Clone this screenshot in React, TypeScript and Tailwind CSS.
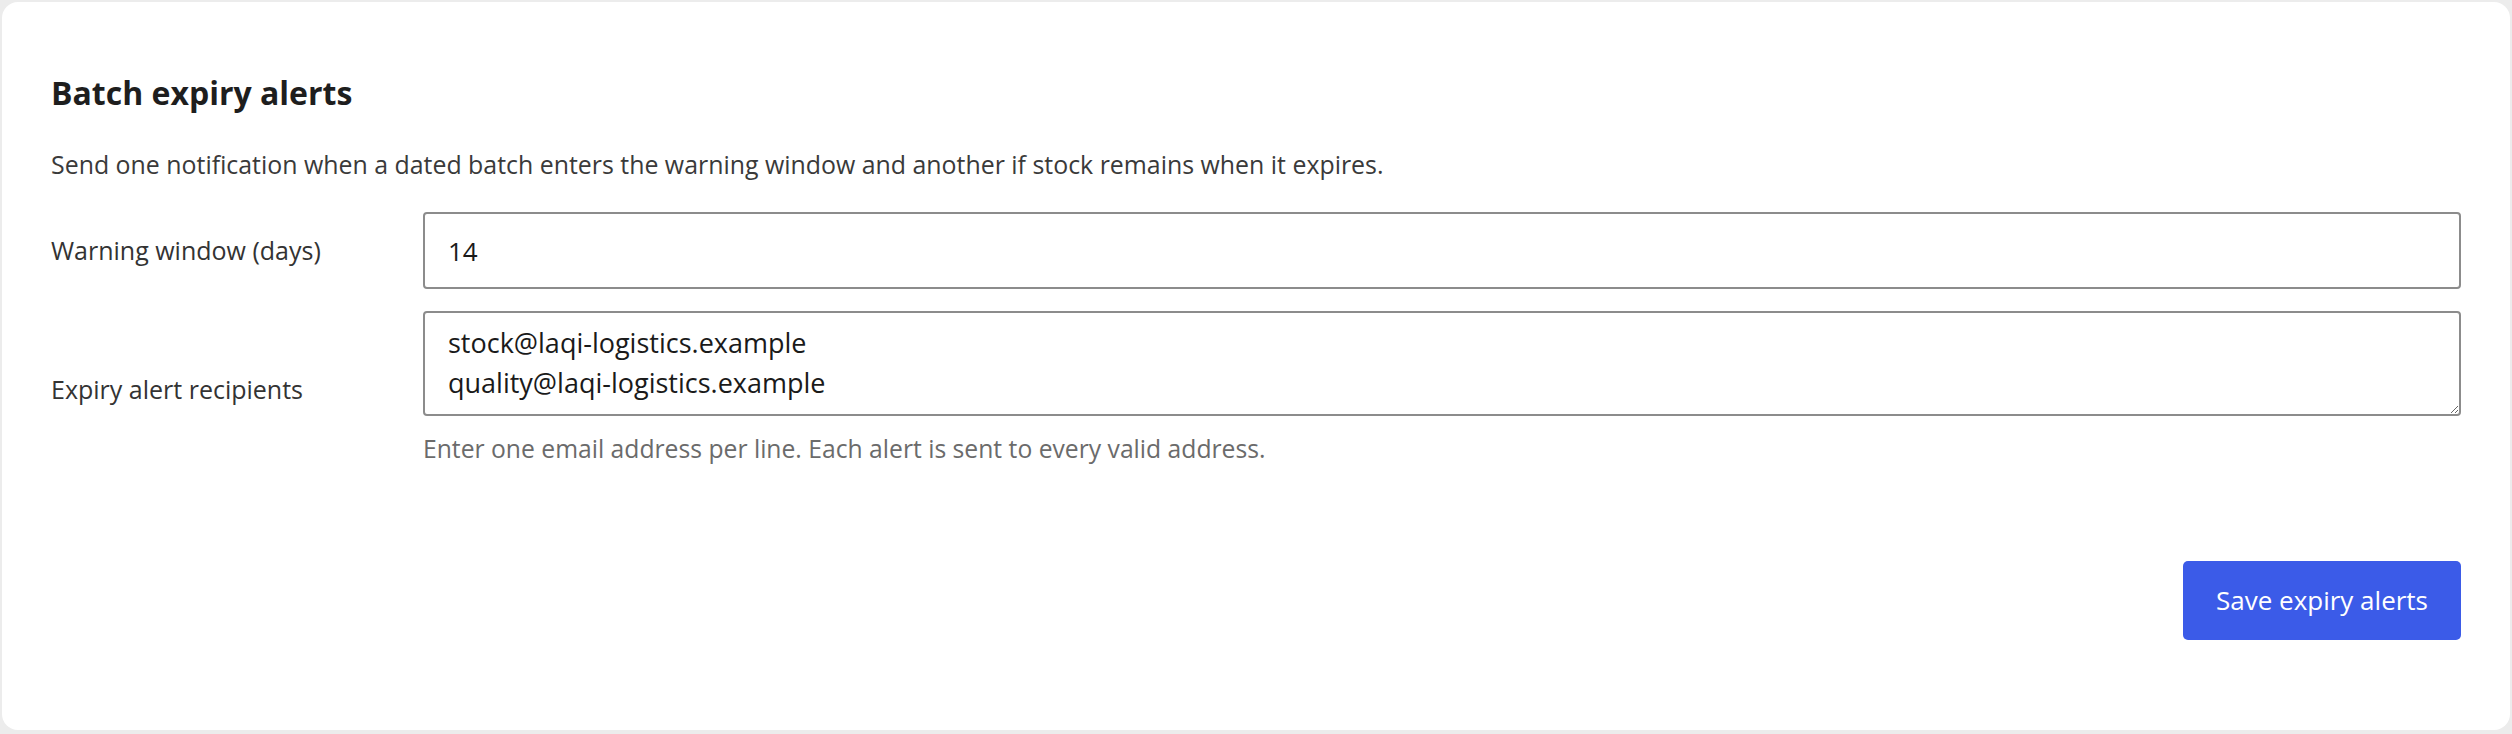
export default function App() {
  return (
    <div className="h-[734px] w-full bg-[#ececec] p-[2px] font-['Open_Sans',sans-serif]">
      <div className="h-[728px] rounded-[16px] bg-white px-[49px] pt-[71px]">
        <h2 className="text-[32px] leading-[40px] font-bold text-[#1e1e1e]">Batch expiry alerts</h2>
        <p className="mt-[32px] text-[24.9px] leading-[38px] text-[#3a3a3a]">
          Send one notification when a dated batch enters the warning window and another if stock remains when it expires.
        </p>

        <div className="mt-[29px] grid grid-cols-[372px_1fr] items-center gap-y-[22px] text-[25px] text-[#333]">
          <label htmlFor="warning-days">Warning window (days)</label>
          <input
            id="warning-days"
            readOnly
            value="14"
            className="h-[77px] w-full rounded-[4px] border-2 border-[#8c8c8c] bg-white px-[23px] text-[26px] text-[#1a1a1a] outline-none"
          />

          <label htmlFor="recipients">Expiry alert recipients</label>
          <div>
            <textarea
              id="recipients"
              readOnly
              value={"stock@laqi-logistics.example\nquality@laqi-logistics.example"}
              className="block h-[105px] w-full rounded-[4px] border-2 border-[#8c8c8c] bg-white px-[23px] py-[10px] text-[27px] leading-[40px] text-[#1a1a1a] outline-none"
            />
            <p className="mt-[14px] text-[24.7px] leading-[38px] text-[#6b6b6b]">
              Enter one email address per line. Each alert is sent to every valid address.
            </p>
          </div>
        </div>

        <div className="mt-[93px] flex justify-end">
          <button className="h-[79px] w-[278px] rounded-[5px] bg-[#3b5be8] text-[26px] text-white">
            Save expiry alerts
          </button>
        </div>
      </div>
    </div>
  );
}
